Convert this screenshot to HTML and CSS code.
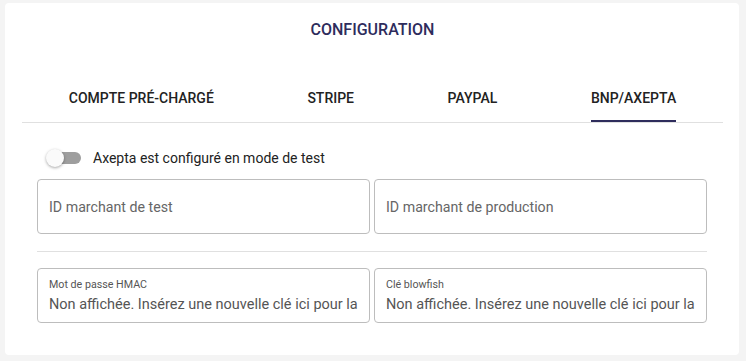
FILE: index.html
```html
<!DOCTYPE html>
<html lang="fr">
<head>
<meta charset="utf-8">
<title>Configuration</title>
<link rel="stylesheet" href="styles.css">
</head>
<body>
<div class="card">
  <h1 class="title">CONFIGURATION</h1>
  <div class="tabs">
    <div class="tab"><span class="tab-label">COMPTE PRÉ-CHARGÉ</span></div>
    <div class="tab"><span class="tab-label">STRIPE</span></div>
    <div class="tab"><span class="tab-label">PAYPAL</span></div>
    <div class="tab active"><span class="tab-label">BNP/AXEPTA</span></div>
  </div>
  <div class="form">
    <div class="toggle-row">
      <span class="switch"><span class="track"></span><span class="thumb"></span></span>
      <span class="toggle-label">Axepta est configuré en mode de test</span>
    </div>
    <div class="row">
      <div class="field"><span class="placeholder">ID marchant de test</span></div>
      <div class="field"><span class="placeholder">ID marchant de production</span></div>
    </div>
    <hr class="divider">
    <div class="row">
      <div class="field filled">
        <span class="flabel">Mot de passe HMAC</span>
        <span class="value">Non affichée. Insérez une nouvelle clé ici pour la</span>
      </div>
      <div class="field filled">
        <span class="flabel">Clé blowfish</span>
        <span class="value">Non affichée. Insérez une nouvelle clé ici pour la</span>
      </div>
    </div>
  </div>
</div>
</body>
</html>
```
FILE: styles.css
```css
* { box-sizing: border-box; }
html, body { margin: 0; }
body {
  background: #f4f4f4;
  padding: 3px 7px 6px 5px;
  font-family: Roboto, "Liberation Sans", Arial, sans-serif;
}
.card {
  background: #fff;
  border-radius: 4px;
  padding: 17px 16px 32px 17px;
  height: 352px;
}
.title {
  margin: 0;
  text-align: center;
  font-size: 16px;
  line-height: 20px;
  font-weight: 500;
  color: #2e2c5c;
}
.tabs {
  margin-top: 34px;
  display: flex;
  border-bottom: 1px solid #e0e0e0;
  height: 49px;
}
.tab {
  flex: 1 1 auto;
  display: flex;
  justify-content: center;
  align-items: stretch;
}
.tab-label {
  display: flex;
  align-items: center;
  font-size: 14px;
  font-weight: 500;
  color: #222;
  border-bottom: 2px solid transparent;
  padding-top: 2px;
}
.tab.active .tab-label { border-bottom-color: #2e2c5c; }
.form { padding: 0 16px 0 15px; }
.toggle-row {
  margin-top: 25px;
  height: 20px;
  display: flex;
  align-items: center;
  gap: 11px;
  padding-left: 9px;
}
.switch {
  position: relative;
  width: 36px;
  height: 18px;
  display: block;
}
.track {
  position: absolute;
  left: 4px;
  top: 3px;
  width: 31px;
  height: 12px;
  border-radius: 6px;
  background: #9e9e9e;
}
.thumb {
  position: absolute;
  left: 0;
  top: 0;
  width: 18px;
  height: 18px;
  border-radius: 50%;
  background: #fafafa;
  box-shadow: 0 1px 3px rgba(0,0,0,0.35);
}
.toggle-label { font-size: 14px; color: #222; }
.row {
  margin-top: 11px;
  display: flex;
  gap: 4px;
}
.field {
  flex: 1 1 0;
  min-width: 0;
  height: 55px;
  border: 1px solid #bdbdbd;
  border-radius: 4px;
  padding: 0 11px;
  display: flex;
  flex-direction: column;
  justify-content: center;
  overflow: hidden;
}
.placeholder { font-size: 14.2px; color: #666; }
.field.filled { justify-content: flex-start; padding-top: 9px; }
.flabel { font-size: 10.7px; line-height: 14px; color: #555; }
.value {
  font-size: 14.5px;
  line-height: 20px;
  margin-top: 3px;
  color: #555;
  white-space: nowrap;
}
.divider {
  margin: 17px 0 16px;
  border: 0;
  border-top: 1px solid #e0e0e0;
  height: 0;
}
.divider + .row { margin-top: 0; }
```
